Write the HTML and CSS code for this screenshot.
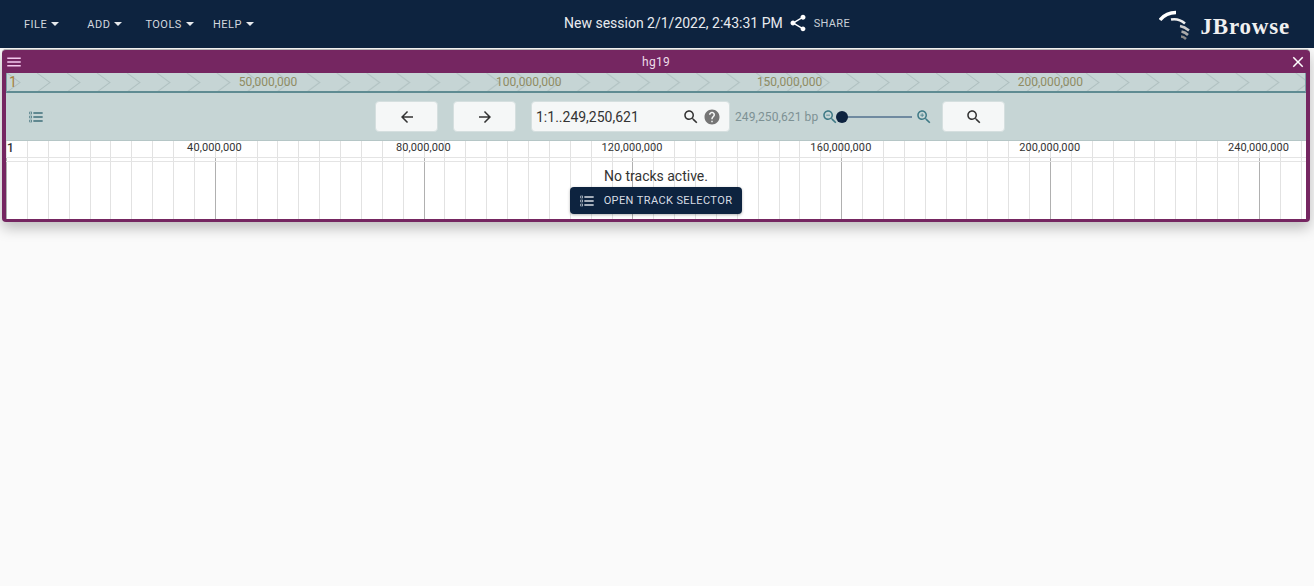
FILE: index.html
```html
<!DOCTYPE html>
<html lang="en">

<head>
    <meta charset="UTF-8">
    <title>JBrowse</title>
    <link rel="stylesheet" href="styles.css">
</head>

<body>
    <header class="app-bar">
        <nav class="menu">
            <span class="menu-item menu-file">File <i class="caret"></i></span>
            <span class="menu-item menu-add">Add <i class="caret"></i></span>
            <span class="menu-item menu-tools">Tools <i class="caret"></i></span>
            <span class="menu-item">Help <i class="caret"></i></span>
        </nav>
        <div class="session">
            <span class="session-name">New session 2/1/2022, 2:43:31 PM</span>
            <svg class="share-icon" viewBox="0 0 24 24" width="20" height="20">
                <path fill="#fff" d="M18 16.08c-.76 0-1.44.3-1.96.77L8.91 12.7c.05-.23.09-.46.09-.7s-.04-.47-.09-.7l7.05-4.11c.54.5 1.25.81 2.04.81 1.66 0 3-1.34 3-3s-1.34-3-3-3-3 1.34-3 3c0 .24.04.47.09.7L8.04 9.81C7.5 9.31 6.79 9 6 9c-1.66 0-3 1.34-3 3s1.34 3 3 3c.79 0 1.5-.31 2.04-.81l7.12 4.16c-.05.21-.08.43-.08.65 0 1.61 1.31 2.92 2.92 2.92s2.92-1.31 2.92-2.92-1.31-2.92-2.92-2.92z"/>
            </svg>
            <span class="share-label">Share</span>
        </div>
        <div class="logo">
            <svg class="logo-mark" viewBox="0 0 32 30" width="32" height="30" fill="none">
                <path stroke="#fff" stroke-width="3.5" d="M1 10 C5 5 10 2.5 17 2.5"/>
                <path stroke="#eee" stroke-width="2.5" d="M12 9.5 C17 8.5 22 10 26 13.5"/>
                <path stroke="#ccc" stroke-width="2.5" d="M21 16 C24 16.5 27 18 30 20.5"/>
                <path stroke="#aaa" stroke-width="2.5" d="M22.5 21.5 C25 22 27 23 29 25"/>
                <path stroke="#888" stroke-width="2.5" d="M22 26.5 C24 26.5 25.5 27.5 27 29"/>
            </svg>
            <span class="logo-text">JBrowse</span>
        </div>
    </header>

    <section class="view">
        <div class="view-title">
            <svg viewBox="0 0 24 24" width="18" height="18"><path fill="#f3c9ee" d="M3 18h18v-2H3zm0-5h18v-2H3zm0-7v2h18V6z"/></svg>
            <span class="view-name">hg19</span>
            <svg viewBox="0 0 24 24" width="18" height="18"><path fill="#fff" d="M19 6.41 17.59 5 12 10.59 6.41 5 5 6.41 10.59 12 5 17.59 6.41 19 12 13.41 17.59 19 19 17.59 13.41 12z"/></svg>
        </div>

        <div class="view-body">
            <div class="overview">
                <svg class="chevrons" width="1300" height="19">
                    <defs>
                        <pattern id="chev" x="0" y="0" width="29.97" height="19" patternUnits="userSpaceOnUse">
                            <path d="M0 0 L13 9.5 L0 19" fill="none" stroke="#aebfbf" stroke-width="1"/>
                        </pattern>
                    </defs>
                    <rect width="1300" height="19" fill="url(#chev)"/>
                </svg>
                <div class="overview-labels">
                    <span class="overview-one">1</span>
                    <span class="overview-label">50,000,000</span>
                    <span class="overview-label">100,000,000</span>
                    <span class="overview-label">150,000,000</span>
                    <span class="overview-label">200,000,000</span>
                </div>
            </div>

            <div class="controls">
                <svg class="track-icon" viewBox="0 0 24 24" width="16" height="16">
                    <path fill="#3f6f7a" d="M8 5h14v2H8zm0 6h14v2H8zm0 6h14v2H8zM2 4h4v4H2zm1 1v2h2V5zM2 10h4v4H2zm1 1v2h2v-2zM2 16h4v4H2zm1 1v2h2v-2z" fill-rule="evenodd"/>
                </svg>
                <div class="controls-center">
                    <button class="nav-btn">
                        <svg viewBox="0 0 24 24" width="18" height="18"><path fill="#333" d="M20 11H7.83l5.59-5.59L12 4l-8 8 8 8 1.41-1.41L7.83 13H20z"/></svg>
                    </button>
                    <button class="nav-btn">
                        <svg viewBox="0 0 24 24" width="18" height="18"><path fill="#333" d="m12 4-1.41 1.41L16.17 11H4v2h12.17l-5.58 5.59L12 20l8-8z"/></svg>
                    </button>
                    <div class="locstring">
                        <span class="locstring-text">1:1..249,250,621</span>
                        <svg viewBox="0 0 24 24" width="18" height="18"><path fill="#333" d="M15.5 14h-.79l-.28-.27C15.41 12.59 16 11.11 16 9.5 16 5.91 13.09 3 9.5 3S3 5.91 3 9.5 5.91 16 9.5 16c1.61 0 3.09-.59 4.23-1.57l.27.28v.79l5 4.99L20.49 19zm-6 0C7.01 14 5 11.99 5 9.5S7.01 5 9.5 5 14 7.01 14 9.5 11.99 14 9.5 14z"/></svg>
                        <svg viewBox="0 0 24 24" width="18" height="18"><path fill="#757575" d="M12 2C6.48 2 2 6.48 2 12s4.48 10 10 10 10-4.48 10-10S17.52 2 12 2zm1 17h-2v-2h2zm2.07-7.75-.9.92C13.45 12.9 13 13.5 13 15h-2v-.5c0-1.1.45-2.1 1.17-2.83l1.24-1.26c.37-.36.59-.86.59-1.41 0-1.1-.9-2-2-2s-2 .9-2 2H8c0-2.21 1.79-4 4-4s4 1.79 4 4c0 .88-.36 1.68-.93 2.25z"/></svg>
                    </div>
                    <span class="bp-count">249,250,621 bp</span>
                    <div class="zoom-slider">
                        <svg viewBox="0 0 24 24" width="18" height="18"><path fill="#3f7a86" d="M15.5 14h-.79l-.28-.27C15.41 12.59 16 11.11 16 9.5 16 5.91 13.09 3 9.5 3S3 5.91 3 9.5 5.91 16 9.5 16c1.61 0 3.09-.59 4.23-1.57l.27.28v.79l5 4.99L20.49 19zm-6 0C7.01 14 5 11.99 5 9.5S7.01 5 9.5 5 14 7.01 14 9.5 11.99 14 9.5 14zM7 9h5v1H7z"/></svg>
                        <div class="slider-track"><i class="slider-thumb"></i></div>
                        <svg viewBox="0 0 24 24" width="18" height="18"><path fill="#3f7a86" d="M15.5 14h-.79l-.28-.27C15.41 12.59 16 11.11 16 9.5 16 5.91 13.09 3 9.5 3S3 5.91 3 9.5 5.91 16 9.5 16c1.61 0 3.09-.59 4.23-1.57l.27.28v.79l5 4.99L20.49 19zm-6 0C7.01 14 5 11.99 5 9.5S7.01 5 9.5 5 14 7.01 14 9.5 11.99 14 9.5 14zM12 10h-2v2H9v-2H7V9h2V7h1v2h2z"/></svg>
                    </div>
                    <button class="nav-btn search-btn">
                        <svg viewBox="0 0 24 24" width="18" height="18"><path fill="#333" d="M15.5 14h-.79l-.28-.27C15.41 12.59 16 11.11 16 9.5 16 5.91 13.09 3 9.5 3S3 5.91 3 9.5 5.91 16 9.5 16c1.61 0 3.09-.59 4.23-1.57l.27.28v.79l5 4.99L20.49 19zm-6 0C7.01 14 5 11.99 5 9.5S7.01 5 9.5 5 14 7.01 14 9.5 11.99 14 9.5 14z"/></svg>
                    </button>
                </div>
            </div>

            <div class="tracks">
                <div class="ruler">
                    <span class="ruler-one">1</span>
                    <span class="ruler-label">40,000,000</span>
                    <span class="ruler-label">80,000,000</span>
                    <span class="ruler-label">120,000,000</span>
                    <span class="ruler-label">160,000,000</span>
                    <span class="ruler-label">200,000,000</span>
                    <span class="ruler-label">240,000,000</span>
                </div>
                <div class="empty">
                    <p class="empty-text">No tracks active.</p>
                    <button class="open-btn">
                        <svg viewBox="0 0 24 24" width="16" height="16">
                            <path fill="#d7dde4" d="M8 5h14v2H8zm0 6h14v2H8zm0 6h14v2H8zM2 4h4v4H2zm1 1v2h2V5zM2 10h4v4H2zm1 1v2h2v-2zM2 16h4v4H2zm1 1v2h2v-2z" fill-rule="evenodd"/>
                        </svg>
                        Open track selector
                    </button>
                </div>
            </div>
        </div>
    </section>
</body>

</html>
```

FILE: styles.css
```css
* {
    box-sizing: border-box;
}

body {
    margin: 0;
    height: 586px;
    overflow: hidden;
    background-color: #fafafa;
    font-family: Roboto, sans-serif;
    color: #333;
}

.app-bar {
    display: flex;
    align-items: center;
    height: 48px;
    padding: 0 24px;
    background-color: #0d233f;
    color: #fff;
    position: relative;
}

.menu {
    display: flex;
    flex: 1;
}

.menu-item {
    display: flex;
    align-items: center;
    gap: 4px;
    font-size: 11px;
    letter-spacing: 0.5px;
    text-transform: uppercase;
    color: #d3d8df;
}

.menu-file {
    margin-right: 28px;
}

.menu-add {
    margin-right: 23px;
}

.menu-tools {
    margin-right: 19px;
}

.caret {
    width: 0;
    height: 0;
    border-left: 4px solid transparent;
    border-right: 4px solid transparent;
    border-top: 4px solid #e6e9ed;
}

.session {
    display: flex;
    align-items: center;
    position: absolute;
    left: 564px;
    top: 0;
    height: 45px;
}

.session-name {
    font-size: 14px;
    color: #e8ebef;
}

.share-icon {
    margin-left: 5px;
}

.share-label {
    margin-left: 6px;
    margin-top: 1px;
    font-size: 11px;
    letter-spacing: 0.3px;
    text-transform: uppercase;
    color: #c9d0d8;
}

.logo {
    display: flex;
    align-items: center;
}

.logo-mark {
    margin-right: 9px;
    margin-top: 2px;
}

.logo-text {
    font-family: "Liberation Serif", serif;
    font-weight: 700;
    font-size: 23px;
    letter-spacing: 0.8px;
    margin-top: 6px;
    color: #f0f0f0;
}

.view {
    margin: 1px 4px 0 2px;
    height: 173px;
    padding: 1px 4px 3px 4px;
    border-radius: 4px;
    background-color: #752661;
    border-top: 1px solid #b8b8b8;
    box-shadow: 0 6px 14px rgba(0, 0, 0, 0.25);
}

.view-title {
    display: flex;
    align-items: center;
    justify-content: space-between;
    height: 22px;
    margin: 0 -4px;
    padding: 0 3px;
}

.view-name {
    font-size: 12px;
    letter-spacing: 0.3px;
    color: #ecdce8;
}

.view-body {
    display: flex;
    flex-direction: column;
}

.overview {
    position: relative;
    height: 20px;
    overflow: hidden;
    background-color: #c6d5d5;
    border-left: 1px solid #7fa0a6;
    border-right: 1px solid #7fa0a6;
    border-bottom: 2px solid #5f8b92;
}

.chevrons {
    position: absolute;
    left: 0;
    top: 0;
}

.overview-labels {
    position: relative;
    display: flex;
    height: 18px;
    align-items: center;
    padding-left: 2px;
    font-size: 12px;
    color: #8f8c63;
}

.overview-one {
    width: 128.6px;
    flex: none;
    font-size: 14px;
    color: #a5813a;
}

.overview-label {
    width: 260.8px;
    text-align: center;
    flex: none;
}

.controls {
    display: flex;
    align-items: center;
    height: 48px;
    padding-left: 22px;
    background-color: #c6d5d5;
    border-bottom: 1px solid #b5c6c6;
}

.controls-center {
    display: flex;
    align-items: center;
    margin-left: 331px;
}

.nav-btn {
    display: flex;
    flex: none;
    align-items: center;
    justify-content: center;
    width: 63px;
    height: 31px;
    margin-right: 15px;
    padding: 0;
    background-color: #f5f7f7;
    border: 1px solid #d5dfdf;
    border-radius: 4px;
}

.locstring {
    display: flex;
    flex: none;
    align-items: center;
    width: 199px;
    height: 31px;
    padding: 0 8px 0 4px;
    background-color: #f5f7f7;
    border: 1px solid #d5dfdf;
    border-radius: 4px;
    gap: 3px;
}

.locstring-text {
    flex: 1;
    font-size: 14px;
    color: #333;
}

.bp-count {
    flex: none;
    margin-left: 5px;
    font-size: 12px;
    letter-spacing: 0.1px;
    color: #7d9194;
}

.zoom-slider {
    display: flex;
    flex: none;
    align-items: center;
    margin-left: 3px;
}

.slider-track {
    position: relative;
    width: 73px;
    height: 2px;
    margin-right: 3px;
    background-color: #6f8aa0;
}

.slider-thumb {
    position: absolute;
    left: -3px;
    top: -5px;
    width: 12px;
    height: 12px;
    border-radius: 50%;
    background-color: #0d233f;
}

.search-btn {
    margin-left: 9px;
    margin-right: 0;
}

.tracks {
    display: flex;
    flex-direction: column;
    height: 78px;
    background-color: #fff;
    background-image:
        repeating-linear-gradient(90deg, #b0b0b0 0, #b0b0b0 1px, transparent 1px, transparent 208.8px),
        repeating-linear-gradient(90deg, #e2e2e2 0, #e2e2e2 1px, transparent 1px, transparent 20.88px);
    background-position: 0 16px, 0 0;
    background-size: 100% 100%, 100% 100%;
    background-repeat: no-repeat;
}

.ruler {
    position: relative;
    display: flex;
    height: 21px;
    padding: 0 0 0 104.1px;
    font-size: 11px;
    letter-spacing: 0.1px;
    line-height: 14px;
    color: #333;
    background-image: linear-gradient(#e4e4e4, #e4e4e4), linear-gradient(#e4e4e4, #e4e4e4);
    background-size: 100% 1px, 100% 1px;
    background-position: 0 16px, 0 20px;
    background-repeat: no-repeat;
}

.ruler-one {
    position: absolute;
    left: 1px;
    top: 0;
    font-size: 12px;
    font-weight: 500;
}

.ruler-label {
    flex: none;
    width: 208.8px;
    text-align: center;
}

.empty {
    display: flex;
    flex-direction: column;
    align-items: center;
}

.empty-text {
    margin: 3px 0 0;
    font-size: 14px;
    line-height: 22px;
    color: #333;
}

.open-btn {
    display: flex;
    align-items: center;
    gap: 9px;
    height: 27px;
    padding: 0 10px 0 9px;
    background-color: #0d233f;
    border: none;
    border-radius: 4px;
    font-family: Roboto, sans-serif;
    font-size: 11px;
    letter-spacing: 0.4px;
    text-transform: uppercase;
    color: #d7dde4;
    box-shadow: 0 1px 3px rgba(0, 0, 0, 0.3);
}
```
